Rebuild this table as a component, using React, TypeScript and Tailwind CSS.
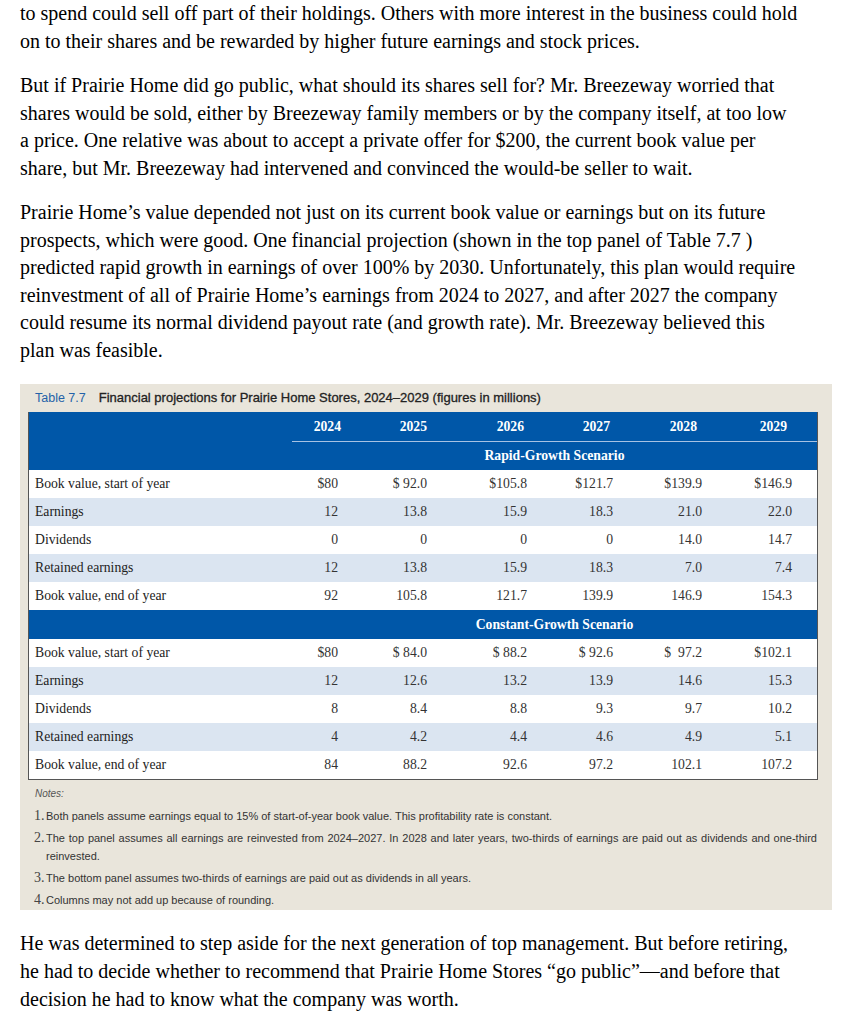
import React from "react";

type Row = { label: string; values: string[] };

const rapid: Row[] = [
  { label: "Book value, start of year", values: ["$80", "$\u00a092.0", "$105.8", "$121.7", "$139.9", "$146.9"] },
  { label: "Earnings", values: ["12", "13.8", "15.9", "18.3", "21.0", "22.0"] },
  { label: "Dividends", values: ["0", "0", "0", "0", "14.0", "14.7"] },
  { label: "Retained earnings", values: ["12", "13.8", "15.9", "18.3", "7.0", "7.4"] },
  { label: "Book value, end of year", values: ["92", "105.8", "121.7", "139.9", "146.9", "154.3"] },
];

const constant: Row[] = [
  { label: "Book value, start of year", values: ["$80", "$\u00a084.0", "$\u00a088.2", "$\u00a092.6", "$\u00a0\u00a097.2", "$102.1"] },
  { label: "Earnings", values: ["12", "12.6", "13.2", "13.9", "14.6", "15.3"] },
  { label: "Dividends", values: ["8", "8.4", "8.8", "9.3", "9.7", "10.2"] },
  { label: "Retained earnings", values: ["4", "4.2", "4.4", "4.6", "4.9", "5.1"] },
  { label: "Book value, end of year", values: ["84", "88.2", "92.6", "97.2", "102.1", "107.2"] },
];

const years = ["2024", "2025", "2026", "2027", "2028", "2029"];
const valuePad = ["pr-[34px]", "pr-[33px]", "pr-[21px]", "pr-[23px]", "pr-[22px]", "pr-[25px]"];
const yearPad = ["pr-[31px]", "pr-[33px]", "pr-[24px]", "pr-[26px]", "pr-[27px]", "pr-[30px]"];

const gridCols = "grid grid-cols-[263px_80px_88px_88px_88px_88px_93px]";

function BodyRows({ rows }: { rows: Row[] }) {
  return (
    <>
      {rows.map((r, i) => (
        <div
          key={r.label}
          className={`${gridCols} h-[28px] items-center ${i % 2 === 1 ? "bg-[#dbe5f1]" : "bg-white"}`}
        >
          <div className="pl-[6px] text-[#222]">{r.label}</div>
          {r.values.map((v, j) => (
            <div key={j} className={`text-right whitespace-pre text-[#333] ${valuePad[j]}`}>
              {v}
            </div>
          ))}
        </div>
      ))}
    </>
  );
}

function Band({ title }: { title: string }) {
  return (
    <div className={`${gridCols} h-[29px] items-center bg-[#0057a8]`}>
      <div className="col-start-2 col-span-6 text-center font-bold text-white">{title}</div>
    </div>
  );
}

function Note({ n, children }: { n: string; children: React.ReactNode }) {
  return (
    <div className="flex">
      <span className="w-[12px] shrink-0 font-['Liberation_Serif',serif] text-[14px] text-[#444]">{n}</span>
      <span className="text-justify">{children}</span>
    </div>
  );
}

export default function App() {
  return (
    <div className="w-[860px] bg-white text-black font-['Liberation_Serif',serif] pb-[14px]">
      <div className="px-[20px] text-[20px] leading-[27.5px]">
        <p>
          to spend could sell off part of their holdings. Others with more interest in the business could hold
          <br />
          on to their shares and be rewarded by higher future earnings and stock prices.
        </p>
        <p className="mt-[17px]">
          But if Prairie Home did go public, what should its shares sell for? Mr. Breezeway worried that
          <br />
          shares would be sold, either by Breezeway family members or by the company itself, at too low
          <br />
          a price. One relative was about to accept a private offer for $200, the current book value per
          <br />
          share, but Mr. Breezeway had intervened and convinced the would-be seller to wait.
        </p>
        <p className="mt-[17px]">
          Prairie Home’s value depended not just on its current book value or earnings but on its future
          <br />
          prospects, which were good. One financial projection (shown in the top panel of Table 7.7 )
          <br />
          predicted rapid growth in earnings of over 100% by 2030. Unfortunately, this plan would require
          <br />
          reinvestment of all of Prairie Home’s earnings from 2024 to 2027, and after 2027 the company
          <br />
          could resume its normal dividend payout rate (and growth rate). Mr. Breezeway believed this
          <br />
          plan was feasible.
        </p>
      </div>

      <div className="ml-[20px] mt-[20px] w-[812px] bg-[#e9e5db] pt-[6px] pb-[1px]">
        <div className="pl-[15px] h-[16px] leading-[16px] font-['Liberation_Sans',Arial,sans-serif] flex items-baseline">
          <span className="text-[12.5px] text-[#2462a8]">Table 7.7</span>
          <span className="ml-[13px] text-[13px] text-[#222] [-webkit-text-stroke:0.3px_#222]">
            Financial projections for Prairie Home Stores, 2024–2029 (figures in millions)
          </span>
        </div>

        <div className="ml-[8px] mt-[6px] w-[790px] border-x border-b border-[#555] text-[13.7px] leading-[16px]">
          <div className="bg-[#0057a8] text-white font-bold">
            <div className={`${gridCols} h-[29px] items-center`}>
              <div />
              {years.map((y, j) => (
                <div key={y} className={`text-right ${yearPad[j]}`}>
                  {y}
                </div>
              ))}
            </div>
            <div className="ml-[263px] h-px bg-[#a7c2e3]" />
          </div>
          <div className="bg-[#0057a8]">
            <div className={`${gridCols} h-[28px] items-center`}>
              <div className="col-start-2 col-span-6 text-center font-bold text-white">Rapid-Growth Scenario</div>
            </div>
          </div>
          <BodyRows rows={rapid} />
          <Band title="Constant-Growth Scenario" />
          <BodyRows rows={constant} />
        </div>

        <div className="pl-[15px] mt-[7px] h-[14px] leading-[14px] text-[10px] italic text-[#555] font-['Liberation_Sans',Arial,sans-serif]">
          Notes:
        </div>
        <div className="mt-[6px] pl-[14px] pr-[15px] text-[11px] leading-[18px] text-[#333] font-['Liberation_Sans',Arial,sans-serif] flex flex-col gap-[4px]">
          <Note n="1.">Both panels assume earnings equal to 15% of start-of-year book value. This profitability rate is constant.</Note>
          <Note n="2.">
            The top panel assumes all earnings are reinvested from 2024–2027. In 2028 and later years, two-thirds of earnings are paid out as dividends and one-third reinvested.
          </Note>
          <Note n="3.">The bottom panel assumes two-thirds of earnings are paid out as dividends in all years.</Note>
          <Note n="4.">Columns may not add up because of rounding.</Note>
        </div>
      </div>

      <div className="px-[20px] mt-[19px] text-[20px] leading-[28px]">
        <p>
          He was determined to step aside for the next generation of top management. But before retiring,
          <br />
          he had to decide whether to recommend that Prairie Home Stores “go public”—and before that
          <br />
          decision he had to know what the company was worth.
        </p>
      </div>
    </div>
  );
}
